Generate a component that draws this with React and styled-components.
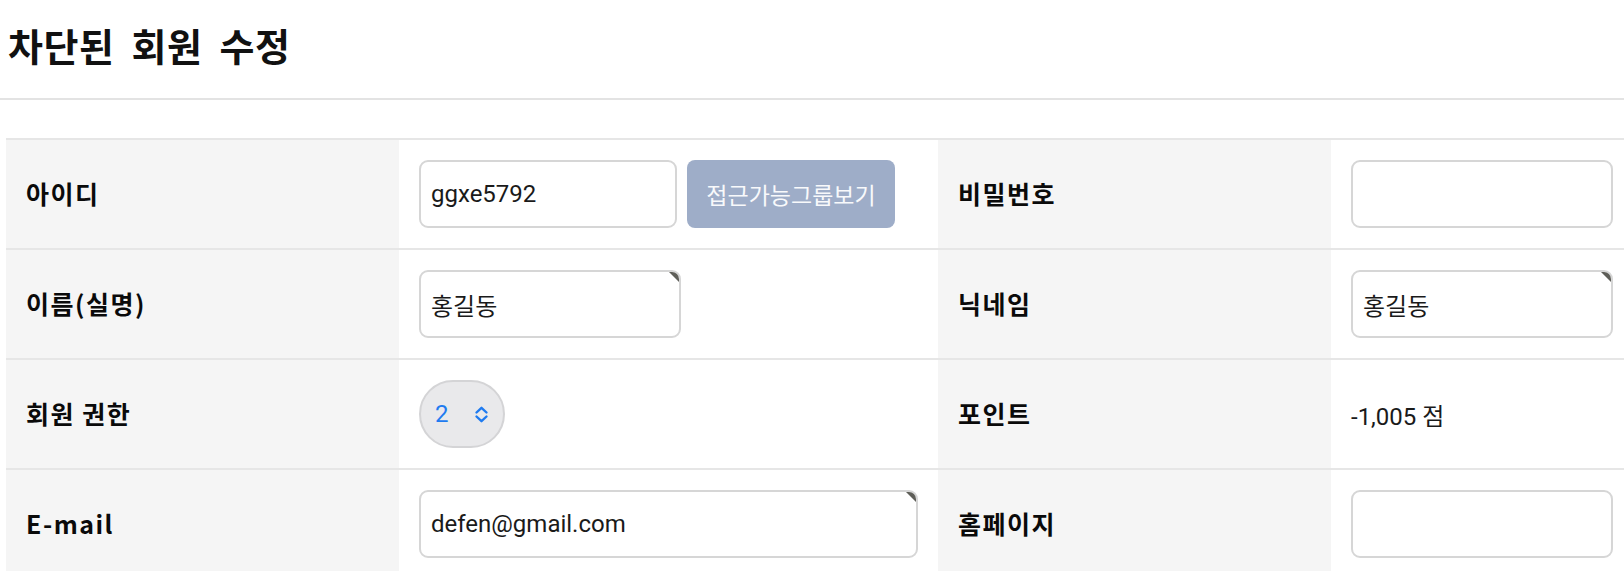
// BlockedMemberEdit.jsx

import React from 'react';
import styled, { createGlobalStyle } from 'styled-components';

const GlobalStyle = createGlobalStyle`
  html, body {
    margin: 0;
    padding: 0;
    overflow: hidden;
    background: #fff;
  }
  * { box-sizing: border-box; }
`;

const Page = styled.div`
  font-family: "Noto Sans CJK KR", "Noto Sans", sans-serif;
  color: #111;
  width: 1624px;
`;

const Header = styled.header`
  height: 100px;
  display: flex;
  align-items: center;
  padding: 0 0 10px 8px;
  border-bottom: 2px solid #e3e3e3;
`;

const Title = styled.h1`
  margin: 0;
  font-size: 38px;
  font-weight: 700;
  letter-spacing: 0.5px;
  word-spacing: 8px;
`;

const Table = styled.div`
  margin: 38px 0 0 6px;
  width: 1864px;
`;

const Row = styled.div`
  display: grid;
  grid-template-columns: 393px 539px 393px 539px;
  height: 110px;
  border-top: 2px solid #e6e6e6;
`;

const Label = styled.div`
  background: #f5f5f5;
  display: flex;
  align-items: center;
  padding: 0 0 3px 20px;
  font-size: 25px;
  font-weight: 700;
  letter-spacing: 1.5px;
  color: #0a0a0a;
`;

const Cell = styled.div`
  display: flex;
  align-items: center;
  gap: 10px;
  padding-left: 20px;
`;

const Field = styled.div`
  position: relative;
  width: ${(p) => p.$width}px;
  height: 68px;

  ${(p) =>
    p.$marked &&
    `
    &::after {
      content: '';
      position: absolute;
      top: 2px;
      right: 2px;
      width: 10px;
      height: 10px;
      background: #5e5e58;
      clip-path: polygon(0 0, 100% 0, 100% 100%);
      border-top-right-radius: 7px;
    }
  `}
`;

const TextInput = styled.input`
  width: 100%;
  height: 100%;
  border: 2px solid #d6d6d6;
  border-radius: 9px;
  padding: 0 10px;
  font-family: Roboto, "Noto Sans CJK KR", sans-serif;
  font-size: 24px;
  color: #1a1a1a;
  background: #fff;
  outline: none;
`;

const GroupButton = styled.button`
  width: 208px;
  height: 68px;
  border: none;
  border-radius: 8px;
  background: #9eadc8;
  color: #f8f9fb;
  font-family: "Noto Sans CJK KR", sans-serif;
  font-size: 23px;
  font-weight: 400;
  padding: 0;
`;

const LevelSelect = styled.div`
  width: 86px;
  height: 68px;
  border: 2px solid #d4d4d6;
  border-radius: 34px;
  background: #e9e9eb;
  display: flex;
  align-items: center;
  justify-content: space-between;
  padding: 0 14px 0 14px;
  color: #1f7bf0;
  font-family: Roboto, sans-serif;
  font-size: 24px;
`;

const PointText = styled.span`
  font-family: Roboto, "Noto Sans CJK KR", sans-serif;
  font-size: 24px;
  font-weight: 400;
  color: #1a1a1a;
`;

const Chevrons = () => (
  <svg width="15" height="17" viewBox="0 0 15 17" fill="none">
    <path d="M2.5 6.5 L7.5 1.8 L12.5 6.5" stroke="#1f7bf0" strokeWidth="2.4" strokeLinecap="round" strokeLinejoin="round" />
    <path d="M2.5 10.5 L7.5 15.2 L12.5 10.5" stroke="#1f7bf0" strokeWidth="2.4" strokeLinecap="round" strokeLinejoin="round" />
  </svg>
);

const App = () => {
  return (
    <Page>
      <GlobalStyle />
      <Header>
        <Title>차단된 회원 수정</Title>
      </Header>

      <Table>
        <Row>
          <Label>아이디</Label>
          <Cell>
            <Field $width={258}>
              <TextInput defaultValue="ggxe5792" />
            </Field>
            <GroupButton type="button">접근가능그룹보기</GroupButton>
          </Cell>
          <Label>비밀번호</Label>
          <Cell>
            <Field $width={262}>
              <TextInput type="password" />
            </Field>
          </Cell>
        </Row>

        <Row>
          <Label>이름(실명)</Label>
          <Cell>
            <Field $width={262} $marked>
              <TextInput defaultValue="홍길동" />
            </Field>
          </Cell>
          <Label>닉네임</Label>
          <Cell>
            <Field $width={262} $marked>
              <TextInput defaultValue="홍길동" />
            </Field>
          </Cell>
        </Row>

        <Row>
          <Label>회원 권한</Label>
          <Cell>
            <LevelSelect>
              <span>2</span>
              <Chevrons />
            </LevelSelect>
          </Cell>
          <Label>포인트</Label>
          <Cell>
            <PointText>-1,005 점</PointText>
          </Cell>
        </Row>

        <Row>
          <Label>E-mail</Label>
          <Cell>
            <Field $width={499} $marked>
              <TextInput defaultValue="defen@gmail.com" />
            </Field>
          </Cell>
          <Label>홈페이지</Label>
          <Cell>
            <Field $width={262}>
              <TextInput />
            </Field>
          </Cell>
        </Row>
      </Table>
    </Page>
  );
};

export default App;
